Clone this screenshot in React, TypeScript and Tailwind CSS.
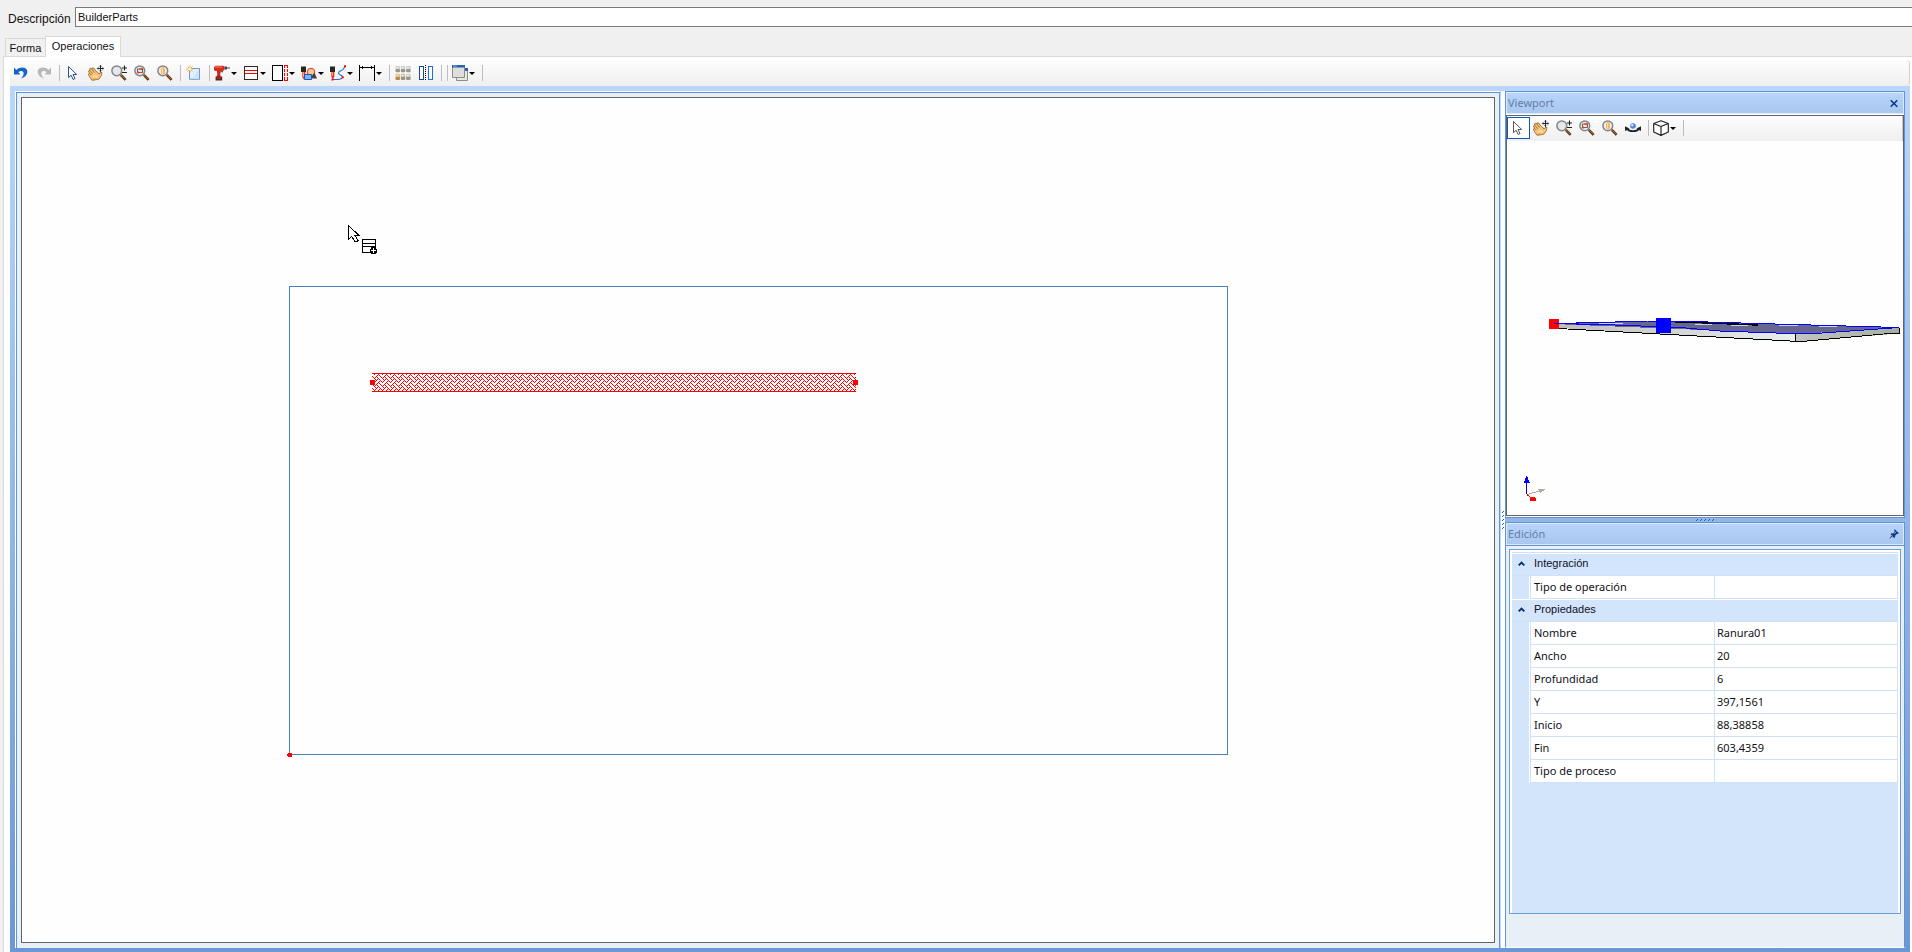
import { useState } from "react";
import type { ReactNode } from "react";

const UI = "font-['Liberation_Sans',Arial,sans-serif]";
const SEGOE = "font-['Noto_Sans','Open_Sans',sans-serif]";

function Icon({ children, crisp = false }: { children: ReactNode; crisp?: boolean }) {
  return (
    <svg
      viewBox="0 0 16 16"
      className="size-4 shrink-0"
      fill="none"
      shapeRendering={crisp ? "crispEdges" : "auto"}
      aria-hidden="true"
    >
      {children}
    </svg>
  );
}

const UndoIcon = () => (
  <Icon>
    <path d="M1 2.500V9.500h6.500L5.300 7.200C7 5.500 9.600 5.500 10.400 7.200c.8 1.800-.2 4-2.600 6.400 4.300-1.400 7.200-4.600 6.400-7.900C13.200 2.200 7.800 1.200 3.300 4.900z" fill="#1462cc" />
  </Icon>
);
const RedoIcon = () => (
  <Icon>
    <path d="M15 2.500V9.500H8.500l2.200-2.300C9 5.500 6.400 5.500 5.600 7.200c-.8 1.800.2 4 2.600 6.400C3.900 12.200 1 9 1.800 5.700 2.800 2.200 8.200 1.200 12.700 4.900z" fill="#b4b9b4" />
  </Icon>
);
const PointerIcon = ({ gray = false }: { gray?: boolean }) => (
  <Icon>
    <path
      d="M3.500 1.500v11.200l2.600-2.500 2 4.300 1.900-.9-2-4.100h3.700z"
      fill="#fff"
      stroke={gray ? "#555" : "#2b4f96"}
      strokeWidth="1"
    />
  </Icon>
);
const HandIcon = () => (
  <Icon>
    <path
      d="M4 15.300 1.600 11.800.4 9l1-.8L.5 6l1.300-.8L1.700 3.700 3 3.200l1 .9.400-1.300 1.300.2 2.600 3.500 1.200.6 1.500 2 1.200-1.500 1.800-.1-.6 3-2.700 3.800z"
      fill="#f6c47c"
      stroke="#8f5a22"
      strokeWidth=".8"
    />
    <path d="m1.500 8.200 2 2M1.900 5.300l2.800 3.500M4 4.100l2.500 3.500" stroke="#8f5a22" strokeWidth=".8" />
    <path d="M5 11.500c1.500-.5 3-.5 4.500.5" stroke="#fce4b4" strokeWidth="1.300" />
    <path d="M5 14.300h4.500" stroke="#d68a35" strokeWidth="1" />
    <path d="M12.500.5v6M9.500 3.500h6" stroke="#222" strokeWidth="1" />
    <path d="m11.300 1.500 1.200-1.200 1.200 1.200M11.300 5.500l1.200 1.200 1.200-1.200M10.400 2.300 9.200 3.500l1.200 1.200M14.600 2.300l1.200 1.200-1.200 1.200" stroke="#222" strokeWidth=".7" />
  </Icon>
);
function Magnifier({ children, lens = "#e4e8ea" }: { children?: ReactNode; lens?: string }) {
  return (
    <Icon>
      <path d="m9.800 9.800 4.800 5" stroke="#5b3517" strokeWidth="2.600" />
      <path d="m10.300 10 4 4.200" stroke="#a9713c" strokeWidth="1" />
      <circle cx="5.800" cy="5.800" r="4.900" fill={lens} stroke="#858585" strokeWidth="1.500" />
      {children}
    </Icon>
  );
}
const ZoomPlusMinusIcon = () => (
  <Magnifier>
    <path d="M13.500 .5v5M11 3h5M11 7.500h5" stroke="#222" strokeWidth="1.100" />
  </Magnifier>
);
const ZoomWindowIcon = () => (
  <Magnifier>
    <path d="M3.500 4h5v3.500h-5z" stroke="#555" strokeWidth=".9" />
    <path d="M5 4h3.500M3.500 7.500H7" stroke="#e2401c" strokeWidth="1" />
    <path d="m7.500 2.400 2 1.600-2 1.600zM4.500 5.900l-2 1.600 2 1.600z" fill="#e2401c" />
  </Magnifier>
);
const ZoomFitIcon = () => (
  <Magnifier lens="#eceef0">
    <path d="M4 3.500 6 1.600l2 1.900v4.800l-2 1.800-2-1.800z" fill="#f3b765" />
    <path d="M5.500 3.300v5.200" stroke="#fde0ac" strokeWidth="1" />
  </Magnifier>
);
const NewSheetIcon = () => (
  <Icon>
    <path d="M3.500 3.500h10v10.800h-10z" fill="#e3effb" stroke="#6a9ccc" />
    <path d="M13 4v10H6z" fill="#c8def5" opacity=".7" />
    <path d="M4 .5v7M.5 4h7M1.500 1.500l5 5M6.500 1.500l-5 5" stroke="#e9a64a" strokeWidth=".9" />
    <circle cx="4" cy="4" r="1.500" fill="#fff3c8" />
  </Icon>
);
const DrillIcon = () => (
  <Icon>
    <path d="M0 2 1.500.8h7.700l1.300 1v3L9 6H1.200L0 5z" fill="#d92c1c" />
    <path d="M1 2h7" stroke="#f58272" strokeWidth="1" />
    <path d="M2.800 6H7l-.8 3 .6 3H2.400l1-3z" fill="#c4281a" />
    <path d="M1.600 11.500h6.600v4H1.600z" fill="#5a2622" />
    <path d="M2.500 13h4.500" stroke="#d92c1c" />
    <path d="M10.500 1.500H13v3h-2.500zM7 6h2.200L8 8z" fill="#444" />
    <path d="M13 3h3" stroke="#666" strokeWidth="1.200" />
  </Icon>
);
const SlotIcon = () => (
  <Icon crisp>
    <path d="M1.500 1.500h13v13h-13z" stroke="#2b2b1f" fill="#f9f9f9" />
    <path d="M2 5.500h12M2 8.500h12" stroke="#f00" />
  </Icon>
);
const CutIcon = () => (
  <Icon crisp>
    <path d="M.5.500h10v15H.5z" stroke="#000" fill="#fff" />
    <path d="M12.500 0v16M15.500 0v16" stroke="#f00" strokeDasharray="3 1" />
    <path d="M12 .5h4M12 15.500h4" stroke="#f00" />
  </Icon>
);
const PocketIcon = () => (
  <Icon>
    <path d="M0 1.500h5V7H0z" fill="#29271c" />
    <path d="M1.300 7h3v5l-1.500 2.500L1.300 12z" fill="#ef2b16" />
    <path d="M2.400 7v5" stroke="#ffb48d" />
    <circle cx="10" cy="7" r="3.800" fill="#f6c792" stroke="#e03a1c" />
    <path d="M10.500 11.500 13.500 7.500 16 13.500h-5z" fill="#444" />
    <path d="M3.500 9.500h7v5h-7z" fill="#7fb5f5" stroke="#1556c4" />
  </Icon>
);
const PathIcon = () => (
  <Icon>
    <path d="M0 1.500h5V7H0z" fill="#29271c" />
    <path d="M1.300 7h3v4.500l-1.500 3-1.500-3z" fill="#ef2b16" />
    <path d="M2.400 7v4" stroke="#ffb48d" />
    <path d="M2.500 14.500h5c3 0 5-1 5-2.500-.5-2-4-2-4-4 .2-2.500 3-1.800 4.500-3.500.8-1 1.200-2 2-3" stroke="#2069d8" strokeWidth="1.100" />
    <path d="M1.500 13.500h2v2h-2zM11.700 11.300h2v2h-2zM14 .3h2v2h-2z" fill="#f00" />
  </Icon>
);
const DimensionIcon = () => (
  <Icon crisp>
    <path d="M.5 0v16M15.500 0v16M1 2.500h14" stroke="#000" />
    <path d="M1 2.500 4 1v3zM15 2.500 12 1v3z" fill="#000" />
  </Icon>
);
const ArrayIcon = () => (
  <Icon>
    {[1, 6.3, 11.6].map((x, col) =>
      [1, 8.700].map((y, row) => (
        <g key={`${x}-${y}`}>
          <rect x={x - 0.5} y={y} width="4.500" height="3.500" rx="1" fill={col < 2 && row === 1 ? "#dcc08c" : "#cfcfca"} />
          <rect x={x - 0.5} y={y + 3} width="4.500" height="3.200" rx="1" fill={col === 0 && row === 1 ? "#b98a45" : "#96968e"} />
          <path d={`M${x + 0.5} ${y + 2}h1.800`} stroke="#fff" />
        </g>
      )),
    )}
  </Icon>
);
const MirrorIcon = () => (
  <Icon crisp>
    <path d="M1.500 1.500h4v13h-4z" fill="#fff" stroke="#17499a" />
    <path d="M10.500 1.500h4v13h-4z" fill="#fff" stroke="#1c6de0" />
    <path d="M7.500 0v16" stroke="#000" strokeDasharray="1 1" />
  </Icon>
);
const LayersIcon = () => (
  <Icon>
    <path d="M4.500 4.500h11v11h-11z" fill="#e8e8e4" stroke="#8d8d88" />
    <path d="M12 3h4v3h-4z" fill="#2b5fb0" />
    <path d="M.5.500h12v12H.5z" fill="#dededa" stroke="#8d8d88" />
    <path d="M0 0h13v2.500H0z" fill="#2b5fb0" />
    <path d="M1 1h4" stroke="#7db1ee" />
  </Icon>
);
const OrbitIcon = () => (
  <Icon>
    <path d="M1.500 8c2 4.200 11 4.200 13 0" stroke="#222" strokeWidth="1.800" />
    <path d="M0 11V6.200l4.600 2.600zM16 11V6.200l-4.600 2.600z" fill="#222" />
    <circle cx="8" cy="6" r="2.800" fill="#4d83cf" />
    <circle cx="7.300" cy="5.200" r="1.200" fill="#c9e0fb" />
  </Icon>
);
const CubeIcon = () => (
  <Icon>
    <path
      d="M8 .7 15.300 3.500v8.500L8 15.400.7 12V3.500zM.7 3.500 8 6.500l7.300-3M8 6.500v8.900"
      stroke="#262626"
      strokeWidth="1.200"
      fill="#fff"
      strokeLinejoin="round"
    />
  </Icon>
);
const CloseIcon = () => (
  <svg viewBox="0 0 8 7" className="h-[7px] w-2" aria-hidden="true">
    <path d="m.7.300 6.600 6.400M7.300.300.700 6.700" stroke="#0b3a80" strokeWidth="1.600" />
  </svg>
);
const PinIcon = () => (
  <svg viewBox="0 0 10 10" className="size-[10px]" aria-hidden="true">
    <path d="M5.500 0 10 4.300l-1.200.5-1 .1-1.700 1.800v1.600l-1 .6-3.500-3.600.8-1 1.700.1 1.500-1.600-.2-1.400zM3 6.200 0 10l4-2.800z" fill="#0b3a80" />
    <path d="m5.300 4.600 1.800-1.900" stroke="#b5d1f6" strokeWidth="1" />
  </svg>
);

type Tool = { label: string; icon: ReactNode; menu?: boolean } | "separator";

const mainTools: Tool[] = [
  { label: "Deshacer", icon: <UndoIcon /> },
  { label: "Rehacer", icon: <RedoIcon /> },
  "separator",
  { label: "Seleccionar", icon: <PointerIcon /> },
  { label: "Desplazar", icon: <HandIcon /> },
  { label: "Zoom", icon: <ZoomPlusMinusIcon /> },
  { label: "Zoom ventana", icon: <ZoomWindowIcon /> },
  { label: "Zoom total", icon: <ZoomFitIcon /> },
  "separator",
  { label: "Nuevo", icon: <NewSheetIcon /> },
  "separator",
  { label: "Taladro", icon: <DrillIcon />, menu: true },
  { label: "Ranura", icon: <SlotIcon />, menu: true },
  { label: "Corte", icon: <CutIcon />, menu: true },
  { label: "Vaciado", icon: <PocketIcon />, menu: true },
  { label: "Contorno", icon: <PathIcon />, menu: true },
  { label: "Cota", icon: <DimensionIcon />, menu: true },
  "separator",
  { label: "Matriz", icon: <ArrayIcon /> },
  { label: "Simetría", icon: <MirrorIcon /> },
  "separator",
  "separator",
  { label: "Ventanas", icon: <LayersIcon />, menu: true },
  "separator",
];

const viewTools: Tool[] = [
  { label: "Seleccionar", icon: <PointerIcon gray /> },
  { label: "Desplazar", icon: <HandIcon /> },
  { label: "Zoom", icon: <ZoomPlusMinusIcon /> },
  { label: "Zoom ventana", icon: <ZoomWindowIcon /> },
  { label: "Zoom total", icon: <ZoomFitIcon /> },
  { label: "Orbitar", icon: <OrbitIcon /> },
  "separator",
  { label: "Vista", icon: <CubeIcon />, menu: true },
  "separator",
];

function Toolbar({ tools, selected }: { tools: Tool[]; selected?: number }) {
  return (
    <div role="toolbar" className="flex h-full items-center">
      {tools.map((tool, i) =>
        tool === "separator" ? (
          <span key={i} className="flex w-[6px] justify-center">
            <span className="h-4 w-px bg-[#bdbdbd]" />
          </span>
        ) : (
          <button
            key={i}
            type="button"
            aria-label={tool.label}
            className={`flex h-[22px] items-center gap-px border ${tool.menu ? "w-[29px] pl-px" : "w-[23px] pl-0.5"} ${
              selected === i ? "border-[#0a5ac2] bg-white" : "border-transparent"
            }`}
          >
            {tool.icon}
            {tool.menu && (
              <svg viewBox="0 0 6 3" className="h-[3px] w-[6px] shrink-0" aria-hidden="true">
                <path d="M0 0h6L3 3z" fill="#000" />
              </svg>
            )}
          </button>
        ),
      )}
    </div>
  );
}

const weave = [0x88, 0x54, 0x22, 0x45, 0x88, 0x14, 0x22, 0x51];

function Drawing() {
  return (
    <svg viewBox="22 98 1472 844" className="block h-full w-full" shapeRendering="crispEdges" role="img" aria-label="Pieza">
      <defs>
        <pattern id="weave" x="22" y="98" width="8" height="8" patternUnits="userSpaceOnUse">
          {weave.map((bits, y) =>
            Array.from({ length: 8 }, (_, x) =>
              bits & (0x80 >> x) ? <rect key={`${x}-${y}`} x={x} y={y} width="1" height="1" fill="#f00" /> : null,
            ),
          )}
        </pattern>
      </defs>
      <rect x="289.500" y="286.500" width="938" height="468" fill="none" stroke="#4682b4" />
      <rect x="372" y="373" width="484" height="18" fill="url(#weave)" />
      <path d="M372 373.500h484M372 391.500h484" stroke="#f00" />
      <path d="M370 380h5v5h-5zM853 380h5v5h-5zM288 753h4v4h-4zM287 754h1v2h-1z" fill="#f00" />
      <path d="M348.500 225.500v14l3-3 3.500 5 2 .5 1-1.500-3-5h4z" fill="#fff" stroke="#000" />
      <path d="M362.500 239.500h13v13h-13z" fill="#fff" stroke="#000" />
      <path d="M362 243.500h14M362 246.500h14" stroke="#000" />
      <path d="M371 247h5v2h1v4h-1v1h-5v-1h-1v-4h1z" fill="#000" />
      <path d="M373 248h1v2h2v1h-2v2h-1v-2h-2v-1h2z" fill="#fff" />
    </svg>
  );
}

function Scene() {
  return (
    <svg viewBox="1507 141 396 374" className="block h-full w-full" shapeRendering="crispEdges" role="img" aria-label="Vista 3D">
      <defs>
        <linearGradient id="front">
          <stop offset="0" stopColor="#bcbcba" />
          <stop offset="1" stopColor="#eaeeee" />
        </linearGradient>
        <linearGradient id="side">
          <stop offset="0" stopColor="#c4c4c2" />
          <stop offset="1" stopColor="#a6ae9e" />
        </linearGradient>
      </defs>
      <path d="M1552 324 1795 333.500v8L1552 327.500z" fill="url(#front)" />
      <path d="m1795 333.500 104-6v6l-104 8.500z" fill="url(#side)" />
      <path d="m1552 324 97-3 250 6.500-94 6h-15z" fill="#666690" />
      <path d="M1599 323.500h24M1695 324.500h17M1731 325.500h17M1779 325.500h19M1819 326.500h18" stroke="#c9d6e6" />
      <path d="m1558 328.500 232 12.500h17l82-7.500h10.500V327.500M1795.500 334v7" fill="none" stroke="#000" />
      <path d="M1675 322.500h20l63 2.500" fill="none" stroke="#000" strokeWidth="1.500" />
      <path d="m1554 323.500 45-1 49-1.500h28l81 2.500 142 4-28 2-56 4h-25L1720 331l-40-3.500-65-2.500-60-1.500" fill="none" stroke="#00f" />
      <path d="M1549 319h10v10h-10z" fill="#f00" />
      <path d="M1554 323.500h25" stroke="#00f" />
      <path d="M1656 318h15v15h-15z" fill="#00f" />
      <path d="M1526.500 494v-12" stroke="#00f" />
      <path d="M1526 476h1l3 7h-6z" fill="#00f" />
      <path d="m1527 494.500 14-4" stroke="#a9ada3" />
      <path d="m1538 489 8-.5-6 5z" fill="#a9ada3" />
      <path d="m1527 494.500 4 3" stroke="#f00" />
      <path d="M1531 497h3l2 2v2h-6v-2z" fill="#f00" />
    </svg>
  );
}

function PanelHeader({ title, action, icon }: { title: string; action: string; icon: ReactNode }) {
  return (
    <div className="flex h-[22px] shrink-0 items-center justify-between border border-[#dbe9fc] bg-linear-to-b from-[#b7d4fa] to-[#a9c8ef] pr-1 pl-px">
      <h2 className={`${SEGOE} text-[11px] leading-5 text-[#647da5]`}>{title}</h2>
      <button type="button" aria-label={action} className="flex size-[10px] items-center justify-center">
        {icon}
      </button>
    </div>
  );
}

function Category({ title, open, onToggle }: { title: string; open: boolean; onToggle: () => void }) {
  return (
    <tr className="h-[23px]">
      <th colSpan={3} className="border-y border-t-white border-b-[#cfe0f8] bg-[#d3e5fb] p-0 text-left align-top font-normal">
        <button type="button" aria-expanded={open} onClick={onToggle} className="flex w-full items-center text-left">
          <span className="flex w-[22px] pl-[6px]">
            <svg viewBox="0 0 7 5" className={`h-[5px] w-[7px] ${open ? "" : "rotate-180"}`} aria-hidden="true">
              <path d="M.7 4.300 3.500 1.500l2.800 2.800" stroke="#0b2f75" strokeWidth="1.900" fill="none" />
            </svg>
          </span>
          <span className={`${UI} text-[11px] leading-[18px] text-[#101028]`}>{title}</span>
        </button>
      </th>
    </tr>
  );
}

function Property({ name, value }: { name: string; value: string }) {
  const id = `prop-${name.replace(/ /g, "-").toLowerCase()}`;
  return (
    <tr className="h-[23px]">
      <td className="border-r border-r-white bg-[#d3e5fb] p-0" />
      <th className="border-b border-l border-[#cfe0f8] bg-white p-0 pl-[3px] text-left font-normal">
        <label htmlFor={id} className="block leading-5">
          {name}
        </label>
      </th>
      <td className="border-x border-b border-[#cfe0f8] bg-white p-0 pl-0.5">
        <input id={id} defaultValue={value} className="block h-5 w-full bg-transparent leading-5 outline-none" />
      </td>
    </tr>
  );
}

const properties = [
  ["Nombre", "Ranura01"],
  ["Ancho", "20"],
  ["Profundidad", "6"],
  ["Y", "397,1561"],
  ["Inicio", "88,38858"],
  ["Fin", "603,4359"],
  ["Tipo de proceso", ""],
];

function PropertyGrid() {
  const [integration, setIntegration] = useState(true);
  const [props, setProps] = useState(true);
  return (
    <div className="min-h-0 flex-1 border border-[#6f9bd8] bg-white px-0.5 pt-0.5">
      <div className="h-full border-t border-[#cfe0f8] bg-[#d3e5fb]">
        <table className={`${SEGOE} w-full table-fixed border-separate border-spacing-0 text-[11px] text-[#101018]`}>
          <colgroup>
            <col className="w-[18px]" />
            <col />
            <col />
          </colgroup>
          <tbody>
            <Category title="Integración" open={integration} onToggle={() => setIntegration(!integration)} />
            {integration && <Property name="Tipo de operación" value="" />}
            <Category title="Propiedades" open={props} onToggle={() => setProps(!props)} />
            {props && properties.map(([name, value]) => <Property key={name} name={name} value={value} />)}
          </tbody>
        </table>
      </div>
    </div>
  );
}

function GripDots({ vertical = false }: { vertical?: boolean }) {
  return (
    <span className={`flex ${vertical ? "flex-col" : ""} gap-0.5`}>
      {[0, 1, 2, 3, 4].map((i) => (
        <svg key={i} viewBox="0 0 2 2" className="size-0.5" shapeRendering="crispEdges" aria-hidden="true">
          <path d="M1 0h1v1H1zM0 1h1v1H0z" fill="#1d5fb4" />
        </svg>
      ))}
    </span>
  );
}

export default function App() {
  return (
    <div className={`${UI} flex h-screen flex-col overflow-hidden bg-[#f0f0f0] text-[11px] text-[#111]`}>
      <div className="flex items-center gap-[7px] pt-[7px] pl-2">
        <label htmlFor="description" className="w-[60px] pt-1 text-[12px] leading-4">
          Descripción
        </label>
        <input
          id="description"
          defaultValue="BuilderParts"
          className="h-5 min-w-0 flex-1 border border-r-0 border-[#7a7a7a] bg-white px-0.5 outline-none"
        />
      </div>

      <div role="tablist" className="flex items-end pt-[9px] pl-[5px]">
        <button type="button" role="tab" aria-selected="false" className="h-[18px] w-10 border border-r-0 border-b-0 border-[#d9d9d9] leading-4">
          Forma
        </button>
        <button
          type="button"
          role="tab"
          aria-selected="true"
          className="z-10 -mb-px h-[21px] w-[76px] border border-b-0 border-[#d9d9d9] bg-white pb-0.5 leading-4"
        >
          Operaciones
        </button>
      </div>

      <main className="ml-[3px] flex min-h-0 flex-1 flex-col border-t border-l border-[#d9d9d9] bg-white pr-0.5 pl-[6px]">
        <div className="mt-[3px] h-[26px] shrink-0 rounded-r border-r border-[#d0d0d0] bg-linear-to-b from-[#fdfdfd] to-[#efefef]">
          <Toolbar tools={mainTools} />
        </div>

        <div className="flex min-h-0 flex-1 bg-linear-to-b from-[#bad6fc] to-[#6c97d5] pt-[5px] pr-[5px] pb-1 pl-[5px]">
          <section className="min-w-0 flex-1 border-t border-l border-white">
            <div className="h-full border border-b-0 border-[#6593cf] bg-[#e7eff7] px-1 pt-1 pb-[5px]">
              <div className="h-full border border-[#646464] bg-[#fefefe]">
                <Drawing />
              </div>
            </div>
          </section>

          <div className="flex w-[5px] items-center justify-center border-l border-[#b9d5fb] bg-white">
            <GripDots vertical />
          </div>

          <aside className="flex w-[400px] flex-col">
            <section className="flex h-[427px] shrink-0 flex-col border border-[#6593cf] bg-white pb-px">
              <PanelHeader title="Viewport" action="Cerrar" icon={<CloseIcon />} />
              <div className="mt-px flex min-h-0 flex-1 flex-col border border-[#646464] bg-[#fefefe]">
                <div className="h-[25px] shrink-0 border-r border-[#c8c8c8] bg-linear-to-b from-[#fdfdfd] to-[#efefef] pb-px">
                  <Toolbar tools={viewTools} selected={0} />
                </div>
                <div className="min-h-0 flex-1">
                  <Scene />
                </div>
              </div>
            </section>
            <div className="flex h-1 shrink-0 items-center justify-center">
              <GripDots />
            </div>
            <section className="flex min-h-0 flex-1 flex-col border border-b-white border-[#6593cf] bg-[#e7eff7]">
              <PanelHeader title="Edición" action="Anclar" icon={<PinIcon />} />
              <div className="flex min-h-0 flex-1 flex-col border-t border-[#6593cf] px-[3px] pt-[3px] pb-[33px]">
                <PropertyGrid />
              </div>
            </section>
          </aside>
        </div>
      </main>
    </div>
  );
}
